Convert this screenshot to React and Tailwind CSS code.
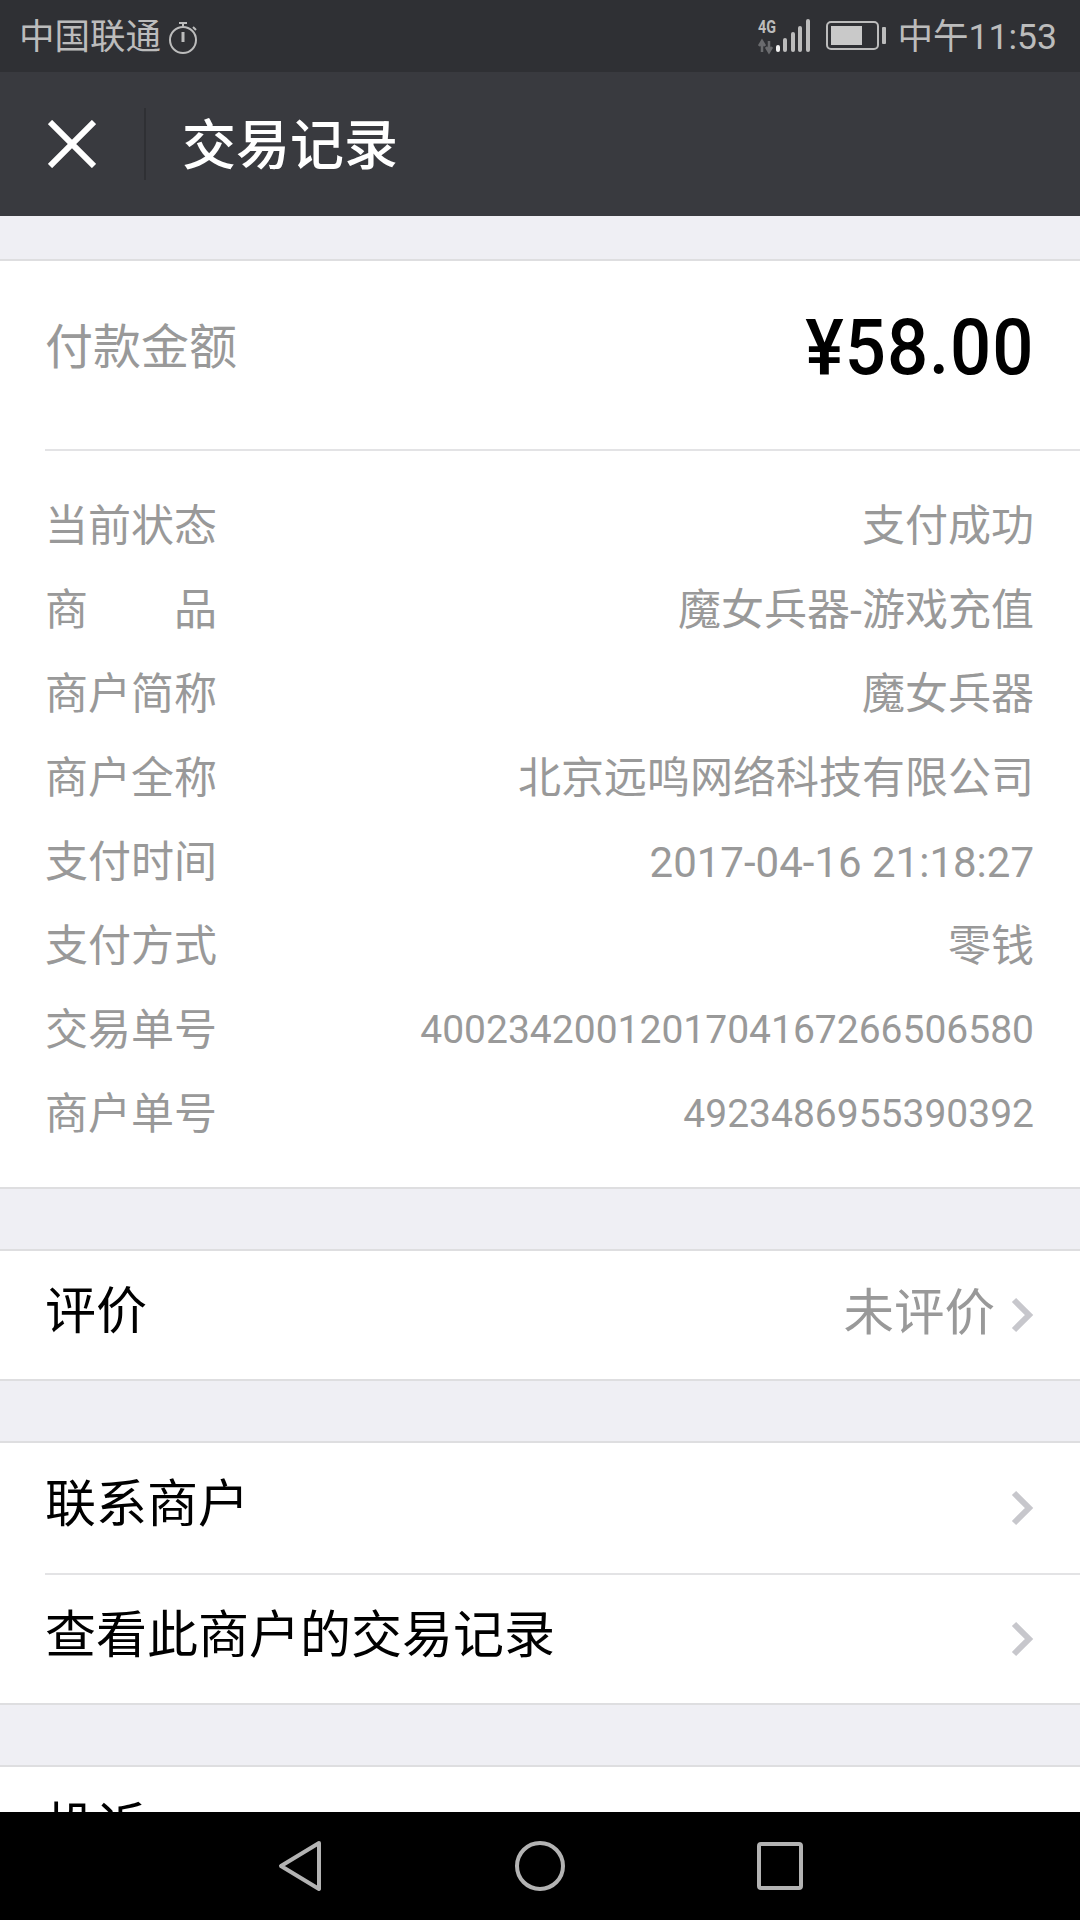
const CJK = "font-['Roboto','Noto_Sans_CJK_SC',sans-serif]";

const details = [
    { label: '当前状态', value: '支付成功' },
    { label: '商品', value: '魔女兵器-游戏充值', spread: true },
    { label: '商户简称', value: '魔女兵器' },
    { label: '商户全称', value: '北京远鸣网络科技有限公司' },
    { label: '支付时间', value: '2017-04-16 21:18:27', size: 'text-[42px]' },
    { label: '支付方式', value: '零钱' },
    { label: '交易单号', value: '4002342001201704167266506580', size: 'text-[39px]' },
    { label: '商户单号', value: '4923486955390392', size: 'text-[39px]' },
];

const Chevron = () => (
    <svg width="24" height="36" viewBox="0 0 24 36" className="shrink-0">
        <path d="M4 3 L19 18 L4 33" fill="none" stroke="#c7c7cc" strokeWidth="6" />
    </svg>
);

const StatusBar = () => (
    <div className="h-[72px] shrink-0 bg-[#2f3034] flex items-center justify-between pl-[19px] pr-[23px] text-[#bcbcbc]">
        <div className="flex items-center gap-[7px]">
            <span className="text-[35.5px] leading-none pt-[4px]">中国联通</span>
            <svg width="30" height="34" viewBox="0 0 30 34" className="mt-[3px]">
                <circle cx="15" cy="19" r="13" fill="none" stroke="currentColor" strokeWidth="2" />
                <path d="M11 2 H19 M15 2 V6 M25 6 L28 9" fill="none" stroke="currentColor" strokeWidth="2" />
                <path d="M15 11 V21" fill="none" stroke="currentColor" strokeWidth="3" />
            </svg>
        </div>
        <div className="flex items-center">
            <svg width="54" height="36" viewBox="0 0 54 36" className="overflow-visible">
                <text x="0" y="15" fontFamily="Roboto" fontWeight="700" fontSize="18" textLength="18" lengthAdjust="spacingAndGlyphs" fill="currentColor">4G</text>
                <path d="M4 34 V24 M1 28 L4 23 L7 28 M11 23 V33 M8 29 L11 34 L14 29" fill="none" stroke="#6a6b6e" strokeWidth="2.5" />
                <rect x="18" y="27" width="4" height="7" rx="2" fill="#f2f2f2" />
                <rect x="25" y="20" width="4" height="14" rx="2" fill="currentColor" />
                <rect x="33" y="14" width="4" height="20" rx="2" fill="currentColor" />
                <rect x="40" y="8" width="4" height="26" rx="2" fill="currentColor" />
                <rect x="48" y="1" width="4" height="33" rx="2" fill="currentColor" />
            </svg>
            <svg width="62" height="30" viewBox="0 0 62 30" className="ml-[14px]">
                <rect x="1" y="1" width="51" height="27" rx="4" fill="none" stroke="currentColor" strokeWidth="2" />
                <rect x="5" y="5" width="31" height="19" fill="#c9c9c9" />
                <rect x="56" y="6" width="4" height="17" rx="1" fill="currentColor" />
            </svg>
            <span className="ml-[10px] text-[35.5px] leading-none pt-[4px]">中午11:53</span>
        </div>
    </div>
);

const Header = () => (
    <div className="h-[144px] shrink-0 bg-[#393a3f] flex items-center">
        <div className="w-[144px] flex justify-center">
            <svg width="48" height="48" viewBox="0 0 48 48">
                <path d="M2 2 L46 46 M46 2 L2 46" fill="none" stroke="#ffffff" strokeWidth="6" />
            </svg>
        </div>
        <div className="w-[2px] h-[72px] bg-[#2f3034]" />
        <h1 className="ml-[36px] pt-[5px] text-[54px] font-medium text-white leading-none">交易记录</h1>
    </div>
);

const LinkRow = ({ label, note, tall, divider }) => (
    <div className="pl-[45px]">
        <div className={`flex items-center justify-between pr-[46px] ${tall ? 'h-[130px]' : 'h-[128px]'} ${divider ? 'box-content border-b-2 border-[#e3e3e5]' : ''}`}>
            <span className="text-[51px] text-black pb-[6px]">{label}</span>
            <div className="flex items-center gap-[15px]">
                {note && <span className="text-[50.5px] text-[#999999] pb-[5px]">{note}</span>}
                <Chevron />
            </div>
        </div>
    </div>
);

const Card = ({ children }) => (
    <div className="bg-white border-y-2 border-[#dedee0]">{children}</div>
);

const App = () => {
    return (
        <div className={`w-[1080px] h-[1920px] flex flex-col overflow-hidden bg-[#efeff4] ${CJK}`}>
            <StatusBar />
            <Header />
            <main className="flex-1 min-h-0 overflow-hidden pt-[43px] flex flex-col gap-[60px]">
                <Card>
                    <div className="pl-[45px]">
                        <div className="h-[190px] pb-[14px] flex items-center justify-between pr-[46px] border-b-2 border-[#e3e3e5]">
                            <span className="text-[48px] text-[#999999]">付款金额</span>
                            <span className="origin-right scale-x-[0.93] text-[78px] font-medium tracking-[1px] text-black leading-none">¥58.00</span>
                        </div>
                    </div>
                    <div className="pl-[45px] pr-[46px] pt-[33px] pb-[31px]">
                        {details.map((row) => (
                            <div key={row.label} className="h-[84px] flex items-center justify-between text-[#999999]">
                                <span className={`w-[172px] text-[43px] flex ${row.spread ? 'justify-between' : ''}`}>
                                    {row.spread ? (
                                        <>
                                            <span>商</span>
                                            <span>品</span>
                                        </>
                                    ) : row.label}
                                </span>
                                <span className={row.size || 'text-[43px]'}>{row.value}</span>
                            </div>
                        ))}
                    </div>
                </Card>
                <Card>
                    <LinkRow label="评价" note="未评价" />
                </Card>
                <Card>
                    <LinkRow label="联系商户" tall divider />
                    <LinkRow label="查看此商户的交易记录" />
                </Card>
                <Card>
                    <LinkRow label="投诉" />
                </Card>
            </main>
            <nav className="h-[108px] shrink-0 bg-black relative z-10 flex items-center justify-center text-[#b3b3b3]">
                <div className="w-[240px] flex justify-center">
                    <svg width="44" height="52" viewBox="0 0 44 52">
                        <path d="M41 3 L3 26 L41 49 Z" fill="none" stroke="currentColor" strokeWidth="4" strokeLinejoin="round" />
                    </svg>
                </div>
                <div className="w-[240px] flex justify-center">
                    <svg width="52" height="52" viewBox="0 0 52 52">
                        <circle cx="26" cy="26" r="23" fill="none" stroke="currentColor" strokeWidth="4" />
                    </svg>
                </div>
                <div className="w-[240px] flex justify-center">
                    <svg width="46" height="48" viewBox="0 0 46 48">
                        <rect x="2" y="2" width="42" height="44" rx="2" fill="none" stroke="currentColor" strokeWidth="4" />
                    </svg>
                </div>
            </nav>
        </div>
    );
};

export default App;
